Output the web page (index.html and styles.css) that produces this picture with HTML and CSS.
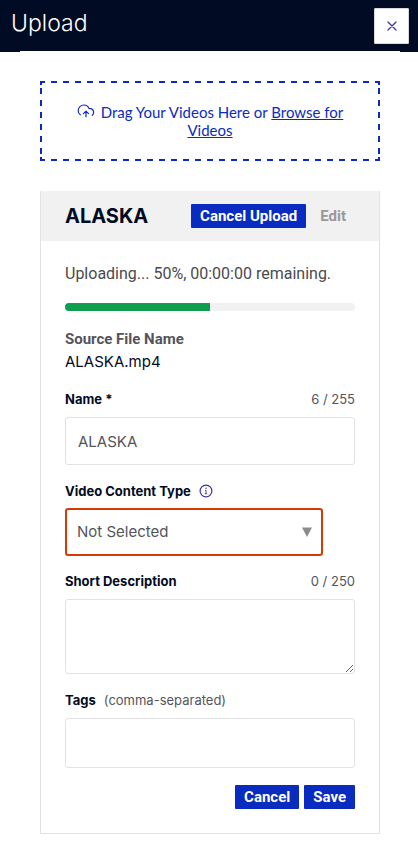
FILE: index.html
```html
<!DOCTYPE html>
<html lang="en">
<head>
<meta charset="utf-8">
<meta name="viewport" content="width=device-width, initial-scale=1">
<title>Upload</title>
<link rel="stylesheet" href="styles.css">
</head>
<body>
<header class="topbar">
  <h1 class="topbar-title">Upload</h1>
  <button class="close" type="button" aria-label="Close">
    <svg width="10" height="10" viewBox="0 0 10 10" fill="none" stroke="currentColor" stroke-width="1.3" stroke-linecap="round"><path d="M1 1l8 8M9 1L1 9"/></svg>
  </button>
</header>
<main class="content">
  <section class="dropzone">
    <p class="drop-text"><svg class="cloud" width="18" height="16" viewBox="0 0 18 16" fill="none" stroke="currentColor" stroke-width="1.2" stroke-linecap="round" stroke-linejoin="round"><path d="M3.300 11.800A4.700 4.700 0 0 1 1.200 7.600C1.200 4.300 3.800 2 6.900 2c2.300 0 4.200 1.200 5 3.300 2.700 0 4.700 1.600 4.700 4.100 0 1.100-.5 2.200-1.300 2.900"/><path d="M9 13.800V8.400M6.500 10.700L9 8.200l2.500 2.500"/></svg>Drag Your Videos Here or <a href="#browse">Browse for Videos</a></p>
  </section>
  <section class="card">
    <header class="card-head">
      <h2 class="card-title">ALASKA</h2>
      <div class="card-actions">
        <button class="btn" type="button">Cancel Upload</button>
        <button class="btn btn-plain" type="button" disabled>Edit</button>
      </div>
    </header>
    <form class="card-body">
      <p class="status">Uploading... 50%, 00:00:00 remaining.</p>
      <div class="progress" role="progressbar" aria-label="Upload progress" aria-valuenow="50" aria-valuemin="0" aria-valuemax="100"><div class="progress-fill" style="width: 50%"></div></div>
      <p class="source-label">Source File Name</p>
      <p class="source-name">ALASKA.mp4</p>
      <div class="label-row"><label for="name">Name *</label><span class="hint">6 / 255</span></div>
      <input class="field" id="name" type="text" value="ALASKA">
      <div class="label-row label-start"><label for="type">Video Content Type</label><svg class="info" width="14" height="14" viewBox="0 0 14 14" fill="none" stroke="currentColor"><circle cx="7" cy="7" r="5.900" stroke-width="1.200"/><path d="M6 6.300h1v3.200M5.800 9.700h2.400" stroke-width=".9"/><circle cx="7" cy="4.200" r=".7" fill="currentColor" stroke="none"/></svg></div>
      <div class="select-wrap">
        <select class="field select" id="type"><option>Not Selected</option></select>
        <svg class="caret" width="10" height="10" viewBox="0 0 10 10"><path d="M0 .5h10L5 10z" fill="currentColor"/></svg>
      </div>
      <div class="label-row"><label for="desc">Short Description</label><span class="hint">0 / 250</span></div>
      <textarea class="field area" id="desc"></textarea>
      <div class="label-row label-start"><label for="tags">Tags</label><span class="hint">(comma-separated)</span></div>
      <input class="field tags" id="tags" type="text">
      <div class="form-actions">
        <button class="btn" type="button">Cancel</button>
        <button class="btn" type="submit">Save</button>
      </div>
    </form>
  </section>
</main>
</body>
</html>
```
FILE: styles.css
```css
* { box-sizing: border-box; }
body {
  margin: 0;
  background: #fff;
  color: #020b24;
  font-family: Inter, Roboto, "Liberation Sans", sans-serif;
  font-size: 15px;
  line-height: 20px;
}
h1, h2, p { margin: 0; }
button, input, select, textarea { font: inherit; }

.topbar {
  display: flex;
  align-items: flex-start;
  justify-content: space-between;
  height: 52px;
  padding: 8px 9px 0 11px;
  background: #020b24;
  color: #fff;
}
.topbar-title { font-size: 23px; font-weight: 350; line-height: 30px; }
.close {
  display: grid;
  place-items: center;
  width: 35px;
  height: 36px;
  padding: 0;
  border: 1px solid #d8d9e0;
  border-radius: 1px;
  background: #fff;
  color: #3a36a8;
}

.content { margin: -1px 18px 0 20px; padding: 30px 20px 9px; background: #fff; }

/* Dashed outline: 6px dashes with 6px gaps, and solid corners */
.dropzone {
  --ink: #0a2bbf;
  --dash-x: linear-gradient(to right, transparent 3px, var(--ink) 3px 9px, transparent 9px);
  --dash-y: linear-gradient(var(--ink) 3px, transparent 3px 9px, var(--ink) 9px);
  --solid: linear-gradient(var(--ink), var(--ink));
  padding: 22px 32px;
  background:
    var(--dash-x) top / 12px 2px repeat-x,
    var(--dash-x) bottom / 12px 2px repeat-x,
    var(--dash-y) left / 2px 12px repeat-y,
    var(--dash-y) right / 2px 12px repeat-y,
    var(--solid) left top / 2px 4px no-repeat,
    var(--solid) right top / 2px 4px no-repeat,
    var(--solid) left bottom / 2px 4px no-repeat,
    var(--solid) right bottom / 2px 4px no-repeat;
  color: var(--ink);
  font-family: Lato, sans-serif;
  font-size: 15px;
  line-height: 18px;
  text-align: center;
}
.cloud { margin-right: 6px; vertical-align: top; }
.dropzone a { color: inherit; }

.card { margin-top: 30px; border: 1px solid #e2e2e4; border-top: 0; }
.card-head {
  display: flex;
  align-items: center;
  justify-content: space-between;
  height: 50px;
  padding: 0 24px;
  background: #f1f1f1;
}
.card-title { font-size: 20px; font-weight: 700; line-height: 24px; }
.card-actions, .form-actions { display: flex; gap: 5px; }
.btn {
  height: 24px;
  padding: 0 9px;
  border: 0;
  border-radius: 1px;
  background: #0a2bbf;
  color: #fff;
  font-family: Roboto, sans-serif;
  font-size: 15px;
  font-weight: 700;
  line-height: 24px;
}
.btn-plain { background: none; color: #98989c; }

.card-body { display: block; padding: 23px 24px 24px; }
.status { color: #4a4a4e; font-family: Roboto, sans-serif; font-size: 16px; }
.progress {
  height: 8px;
  margin-top: 19px;
  overflow: hidden;
  border-radius: 4px;
  background: #f1f1f1;
}
.progress-fill { height: 100%; background: #0f9d50; }
.source-label { margin-top: 18px; color: #54545a; font-family: Roboto, sans-serif; font-size: 15px; font-weight: 700; }
.source-name { margin: 3px 0 17px; }
.label-row {
  display: flex;
  align-items: center;
  justify-content: space-between;
  margin-top: 16px;
  font-size: 13px;
}
.label-row label { font-weight: 650; }
.hint { color: #54545a; }
.info { color: #3a36a8; }
.field {
  display: block;
  width: 100%;
  height: 48px;
  margin-top: 8px;
  padding: 0 12px;
  border: 1px solid #e2e2e4;
  border-radius: 3px;
  background: #fff;
  color: #54545a;
}
.select-wrap { display: grid; width: 258px; margin: 7px 0 15px; align-items: center; }
.select-wrap + .label-row { margin-top: 0; }
.select { grid-area: 1 / 1; margin: 0; padding: 0 10px; border: 2px solid #d83b01; appearance: none; }
.caret { grid-area: 1 / 1; justify-self: end; margin-right: 11px; color: #8c8c90; pointer-events: none; }
.area { height: 75px; padding: 8px 12px; resize: vertical; }
.label-start { justify-content: flex-start; gap: 8px; }
.tags { height: 50px; }
.form-actions { justify-content: flex-end; margin-top: 17px; }
```
